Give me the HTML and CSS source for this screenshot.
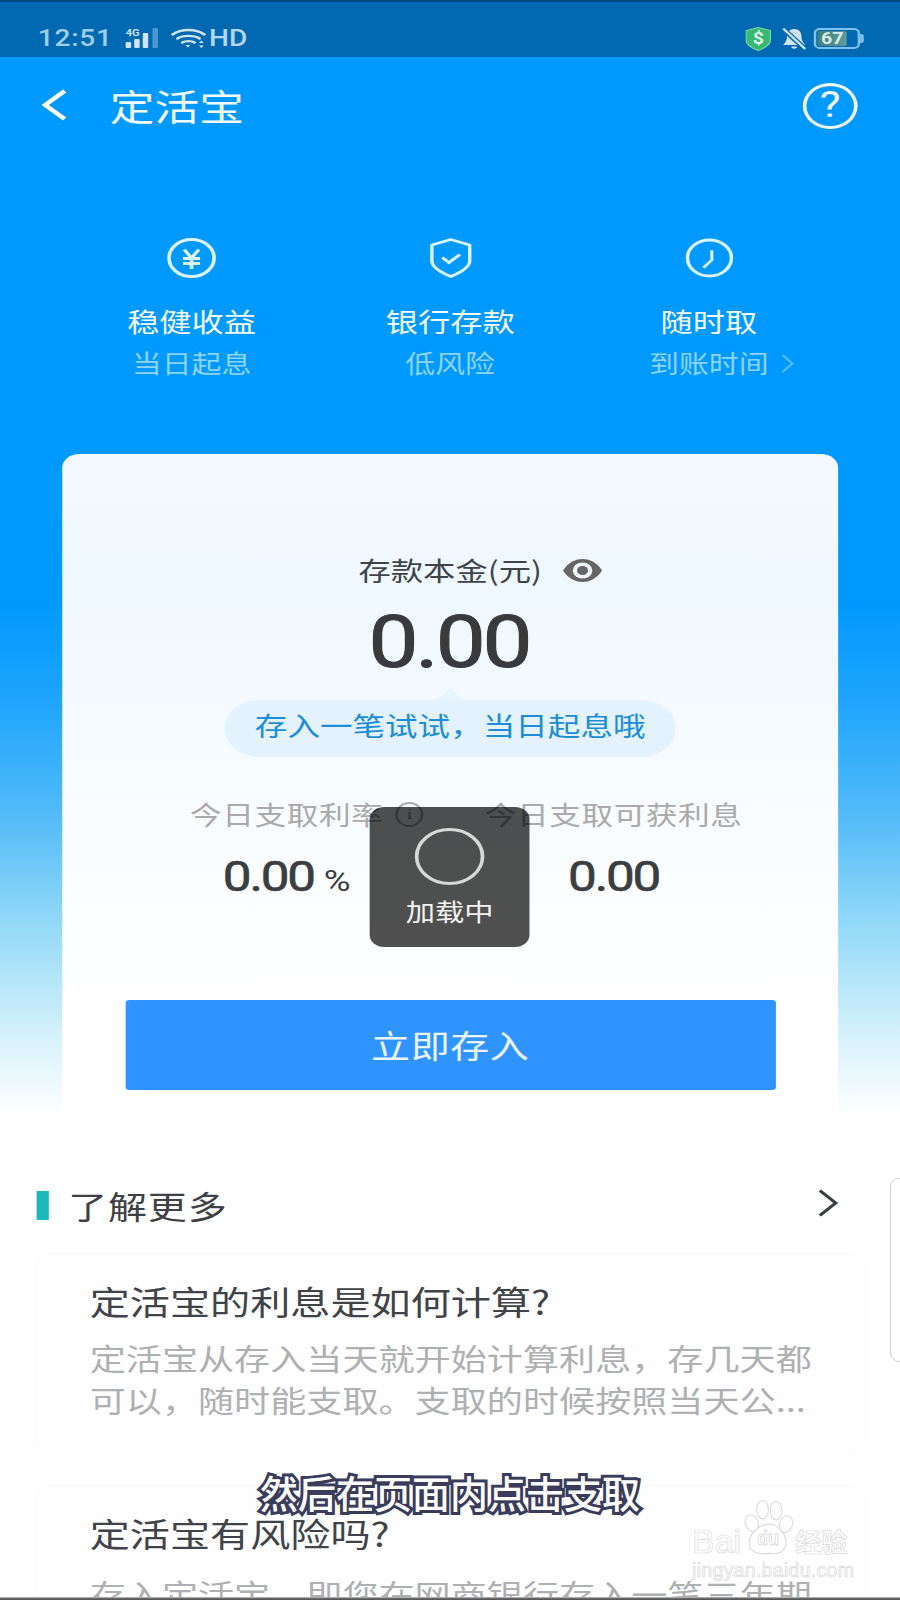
FILE: index.html
```html
<!DOCTYPE html>
<html lang="zh">
<head>
<meta charset="utf-8">
<title>定活宝</title>
<link rel="stylesheet" href="styles.css">
</head>
<body>
<div class="page">
  <div class="screen">
    <div class="status">
      <div class="status-left">
        <span class="time">12:51</span>
        <svg class="ic-signal" viewBox="0 0 30 21"><text x="1" y="8" class="sig-text">4G</text><rect x="1" y="14" width="4.5" height="6" rx="1" fill="#cfe5f5"/><rect x="8" y="11" width="4.5" height="9" rx="1" fill="#cfe5f5"/><rect x="15" y="5" width="4.5" height="15" rx="1" fill="#cfe5f5"/><rect x="23" y="0" width="4.5" height="20" rx="1" fill="#4c97cf"/></svg>
        <svg class="ic-wifi" viewBox="0 0 29 21" fill="none" stroke="#cfe5f5" stroke-width="2.4" stroke-linecap="round"><path d="M1.5 6.5C8.5 .5 20.5 .5 27.5 6.5"/><path d="M5.5 10.5C10 7 19 7 23.5 10.5"/><path d="M9.5 14.5C12 12.7 17 12.7 19.5 14.5"/><path d="M14 19.5l-2-2.4h4z" fill="#cfe5f5" stroke="none"/><path d="M25 12.5l-2 2.4h4zM25 20l-2-2.4h4z" fill="#cfe5f5" stroke="none"/></svg>
        <span class="hd">HD</span>
      </div>
      <div class="status-right">
        <svg class="ic-guard" viewBox="0 0 21 24"><path d="M10.500 .5L20.500 3.500V13C20.500 18 15 21.500 10.500 23.500C6 21.500 .5 18 .5 13V3.500Z" fill="#35b871" stroke="#7fd6a6"/><text x="10.500" y="17" class="guard-text">$</text></svg>
        <svg class="ic-bell" viewBox="0 0 20 22"><path d="M10 1C5.500 1 4 5 4 9C4 13 2 15 1 17H19C18 15 16 13 16 9C16 5 14.500 1 10 1Z M7.500 18.500C8 21.500 12 21.500 12.500 18.500Z" fill="#cfe3f2"/><path d="M1 1L19 21" stroke="#0069b2" stroke-width="4.500"/><path d="M1 .5L19 21" stroke="#cfe3f2" stroke-width="2"/></svg>
        <div class="battery"><span class="battery-level">67</span></div>
      </div>
    </div>

    <div class="header">
      <svg class="ic-back" viewBox="0 0 21 32" fill="none" stroke="#fff" stroke-width="4"><path d="M19 2L3 16L19 30"/></svg>
      <span class="header-title">定活宝</span>
      <span class="help">?</span>
    </div>

    <div class="features">
      <div class="feature">
        <svg class="feature-icon ic-w39" viewBox="0 0 40 40" fill="none" stroke="#d9f3ff" stroke-width="3"><circle cx="20" cy="20" r="18.500"/><path d="M14 11.500L20 20L26 11.500M13 20.500H27M13 25.500H27M20 20V31" stroke-width="3"/></svg>
        <div class="feature-title">稳健收益</div>
        <div class="feature-sub">当日起息</div>
      </div>
      <div class="feature">
        <svg class="feature-icon ic-w34" viewBox="0 0 34 40" fill="none" stroke="#d9f3ff" stroke-width="2.800"><path d="M17 1.500L32.500 7V23C32.500 30 24 35 17 38.500C10 35 1.500 30 1.500 23V7Z" stroke-linejoin="round"/><path d="M10 19.500L15.500 24.500L24.500 16.500"/></svg>
        <div class="feature-title">银行存款</div>
        <div class="feature-sub">低风险</div>
      </div>
      <div class="feature">
        <svg class="feature-icon ic-w38" viewBox="0 0 40 40" fill="none" stroke="#d9f3ff" stroke-width="3"><circle cx="20" cy="20" r="18.500"/><path d="M22 12V22L15 30" stroke-width="2.600"/></svg>
        <div class="feature-title">随时取</div>
        <div class="feature-sub">到账时间<svg class="sub-chevron" viewBox="0 0 12 22" fill="none" stroke="#5cbcf5" stroke-width="2"><path d="M1.500 1.500L10.500 11L1.500 20.500"/></svg></div>
      </div>
    </div>

    <div class="card">
      <div class="balance-label">存款本金(元)<svg class="ic-eye" viewBox="0 0 33 25"><path d="M.5 12.500C5 4 11 1 16.500 1S28 4 32.500 12.500C28 21 22 24 16.500 24S5 21 .5 12.500Z" fill="#666"/><circle cx="16.500" cy="12.500" r="8" fill="#f2f9ff"/><circle cx="16.500" cy="12.500" r="4.500" fill="#666"/></svg></div>
      <div class="balance">0.00</div>
      <div class="tip">存入一笔试试，当日起息哦</div>
      <div class="stats">
        <div class="stat">
          <div class="stat-label">今日支取利率<span class="info">i</span></div>
          <div class="stat-value">0.00<span class="unit">%</span></div>
        </div>
        <div class="stat">
          <div class="stat-label">今日支取可获利息</div>
          <div class="stat-value">0.00</div>
        </div>
      </div>
      <div class="deposit">立即存入</div>
      <div class="toast">
        <span class="spinner"></span>
        <span class="toast-text">加载中</span>
      </div>
    </div>

    <div class="section-head">
      <span class="section-bar"></span>
      <span class="section-title">了解更多</span>
      <svg class="ic-more" viewBox="0 0 17 28" fill="none" stroke="#3a3d42" stroke-width="2.800"><path d="M2 1.500L15 14L2 26.500"/></svg>
    </div>

    <div class="qa">
      <div class="qa-title">定活宝的利息是如何计算?</div>
      <div class="qa-body">定活宝从存入当天就开始计算利息，存几天都<br>可以，随时能支取。支取的时候按照当天公...</div>
    </div>
    <div class="qa">
      <div class="qa-title">定活宝有风险吗?</div>
      <div class="qa-body">存入定活宝，即您在网商银行存入一笔三年期</div>
    </div>
  </div>

  <div class="handle"></div>
  <div class="top-edge"></div>
  <div class="bottom-edge"></div>
  <div class="caption">然后在页面内点击支取</div>
  <div class="watermark">
    <div class="wm-row">
      <span class="wm-latin">Bai</span>
      <svg class="wm-paw" viewBox="0 0 60 60" preserveAspectRatio="none" fill="#fff" stroke="#dcdcdc" stroke-width="1.200"><ellipse cx="12" cy="24" rx="7" ry="9" transform="rotate(-25 12 24)"/><ellipse cx="24" cy="10" rx="6.500" ry="9.500"/><ellipse cx="39" cy="11" rx="6.500" ry="9.500"/><ellipse cx="50" cy="25" rx="7" ry="9" transform="rotate(25 50 25)"/><path d="M31 25C40 25 50 34 50 44C50 54 40 57 31 55C22 57 9 55 9 44C9 34 22 25 31 25Z"/><text x="30" y="47" class="wm-du">du</text></svg>
      <span class="wm-cjk">经验</span>
    </div>
    <div class="wm-url">jingyan.baidu.com</div>
  </div>
</div>
</body>
</html>
```
FILE: styles.css
```css
* { box-sizing: border-box; }
html, body { margin: 0; padding: 0; }
body { font-family: "Noto Sans CJK SC", "Noto Sans", sans-serif; background: #fff; }

.page { position: relative; width: 900px; height: 1600px; overflow: hidden; }
.screen {
  width: 738px;
  height: 1600px;
  overflow: hidden;
  transform: scaleX(1.22);
  transform-origin: 0 0;
  background: linear-gradient(180deg, #0099ff 0, #0099ff 600px, #1ea5fd 700px, #55bcf8 820px, #96dbf8 930px, #d8f2fb 1040px, #ffffff 1115px);
}

/* status bar */
.status {
  height: 57px;
  background: #0069b2;
  display: flex;
  align-items: center;
  justify-content: space-between;
  padding: 20px 30px 0 31px;
}
.status-left, .status-right { display: flex; align-items: center; }
.time { font: 500 23px/1 Roboto, sans-serif; letter-spacing: .6px; color: #9fcdec; }
.ic-signal { width: 30px; height: 21px; margin-left: 10px; }
.sig-text { font: 700 9px Roboto, sans-serif; fill: #cfe5f5; }
.ic-wifi { width: 29px; height: 21px; margin-left: 8px; }
.hd { font: 500 23px/1 Roboto, sans-serif; color: #b4d6ee; margin-left: 2px; }
.ic-guard { width: 21px; height: 24px; }
.guard-text { font: 700 16px Roboto, sans-serif; fill: #dff7e9; text-anchor: middle; }
.ic-bell { width: 20px; height: 22px; margin-left: 9px; }
.battery {
  position: relative;
  width: 38px;
  height: 21px;
  margin: 0 3px 0 6px;
  border: 2px solid #7fc1ee;
  border-radius: 5px;
  padding: 1px;
  display: flex;
}
.battery::after {
  content: "";
  position: absolute;
  right: -5px;
  top: 4px;
  width: 3px;
  height: 9px;
  border-radius: 0 2px 2px 0;
  background: #7fc1ee;
}
.battery-level {
  width: 76%;
  border-radius: 2px;
  background: linear-gradient(90deg, #3f7f7a, #5f9c9c);
  color: #d8ebe6;
  font: 700 16px/15px Roboto, sans-serif;
  text-align: center;
}

/* header */
.header {
  height: 96px;
  display: flex;
  align-items: center;
  padding: 0 35px 0 34px;
  color: #fff;
}
.ic-back { width: 21px; height: 32px; }
.header-title { font-size: 36.700px; line-height: 1; margin-left: 35px; color: #f2fbff; }
.help {
  margin-left: auto;
  width: 45px;
  height: 46px;
  margin-top: 2px;
  border: 3.500px solid #f2fbff;
  border-radius: 50%;
  font: 400 36px/39px Roboto, sans-serif;
  text-align: center;
  color: #f2fbff;
}

/* features */
.features {
  display: grid;
  grid-template-columns: repeat(3, 212px);
  padding: 0 51px;
  margin-top: 85px;
}
.feature { display: flex; flex-direction: column; align-items: center; }
.feature-icon { height: 40px; }
.ic-w39 { width: 40px; }
.ic-w34 { width: 35px; }
.ic-w38 { width: 39px; }
.feature-title { font-size: 26.400px; line-height: 36px; margin-top: 25px; color: #f4fbff; }
.feature-sub { font-size: 24.500px; line-height: 34px; margin-top: 7px; color: #8ed3fb; display: flex; align-items: center; }
.sub-chevron { width: 11px; height: 21px; margin-left: 10px; margin-right: -21px; }

/* main card */
.card {
  position: relative;
  width: 636px;
  height: 656px;
  margin: 74px 0 0 51px;
  padding-top: 99px;
  border-radius: 14px 14px 0 0;
  background: linear-gradient(180deg, #f5f9fd 0, #eff8ff 120px, #f6fbff 300px, #fdfeff 480px, #ffffff 560px);
  display: flex;
  flex-direction: column;
  align-items: center;
}
.balance-label { font-size: 26.500px; line-height: 34px; color: #404448; display: flex; align-items: center; }
.ic-eye { width: 33px; height: 25px; margin-left: 17px; margin-right: -50px; }
.balance { font: 400 73px/80px Roboto, sans-serif; -webkit-text-stroke: 1px #383b3e; letter-spacing: -2.600px; color: #383b3e; margin: 15px 2px 0 0; }
.tip {
  position: relative;
  width: 370px;
  height: 57px;
  margin-top: 18px;
  border-radius: 29px;
  background: #e3f2fd;
  color: #1c8dd6;
  font-size: 26.700px;
  line-height: 50px;
  text-align: center;
}
.tip::before {
  content: "";
  position: absolute;
  left: 50%;
  top: -12px;
  margin-left: -11px;
  border-left: 11px solid transparent;
  border-right: 11px solid transparent;
  border-bottom: 12px solid #e8f4fd;
}
.stats { display: grid; grid-template-columns: repeat(2, 268px); margin-top: 39px; }
.stat { display: flex; flex-direction: column; align-items: center; }
.stat-label { font-size: 26px; line-height: 36px; letter-spacing: .4px; color: #aaa; white-space: nowrap; display: flex; align-items: center; }
.info {
  width: 23px;
  height: 25px;
  margin-left: 10px;
  margin-right: -33px;
  border: 2px solid #aaa;
  border-radius: 50%;
  font: 500 15px/21px "Liberation Serif", serif;
  text-align: center;
  letter-spacing: 0;
  color: #888;
}
.stat-value { font: 400 42px/56px Roboto, sans-serif; -webkit-text-stroke: .6px #3b3e41; letter-spacing: -1.800px; color: #3b3e41; margin-top: 17px; }
.unit { font-size: 30px; letter-spacing: 0; margin-left: 8px; -webkit-text-stroke: 0; }
.deposit {
  width: 533px;
  height: 90px;
  margin-top: 91px;
  border-radius: 3px;
  background: #2f94ff;
  color: #eaf4ff;
  font-size: 32px;
  line-height: 88px;
  letter-spacing: .4px;
  text-align: center;
  flex: none;
}
.toast {
  position: absolute;
  left: 252px;
  top: 353px;
  width: 131px;
  height: 140px;
  padding-top: 21px;
  border-radius: 12px;
  background: rgba(0, 0, 0, .69);
  display: flex;
  flex-direction: column;
  align-items: center;
}
.spinner { width: 57px; height: 57px; border: 3px solid #d8d8d6; border-radius: 50%; }
.toast-text { font-size: 24px; line-height: 36px; margin-top: 8px; color: #f2f2f0; }

/* section */
.section-head {
  height: 44px;
  margin-top: 73px;
  padding: 0 51px 0 30px;
  display: flex;
  align-items: center;
}
.section-bar { width: 10px; height: 29px; background: #1cb9ba; }
.section-title { font-size: 32px; line-height: 44px; letter-spacing: .6px; margin-left: 16px; color: #3e4145; }
.ic-more { width: 17px; height: 28px; margin-left: auto; position: relative; top: -2px; }

.qa {
  width: 679px;
  margin: 27px 0 0 30px;
  padding: 25px 0 31px 43.500px;
  border-radius: 14px;
  background: #fefefe;
  box-shadow: 0 0 4px rgba(0, 0, 0, .03);
}
.qa + .qa { margin-top: 34px; }
.qa + .qa .qa-body { margin-top: 18px; }
.qa-title { font-size: 32.900px; line-height: 44px; color: #404347; white-space: nowrap; }
.qa-body { font-size: 29.600px; line-height: 42px; margin-top: 14px; color: #aeb0b2; white-space: nowrap; }

/* overlays */
.handle {
  position: absolute;
  right: -2px;
  top: 1178px;
  width: 12px;
  height: 184px;
  border: 1px solid #d0d0d0;
  border-radius: 9px 0 0 9px;
  background: #fff;
}
.top-edge { position: absolute; left: 0; right: 0; top: 0; height: 2px; background: #00467f; }
.bottom-edge { position: absolute; left: 0; right: 0; bottom: 0; height: 3px; background: linear-gradient(180deg, #c9c9c9 0, #6a6a6a 50%, #4e4e4e 100%); }
.caption {
  position: absolute;
  left: 258px;
  top: 1466px;
  width: 384px;
  font-size: 38px;
  line-height: 52px;
  font-weight: 500;
  text-align: center;
  white-space: nowrap;
  color: #fff;
  -webkit-text-stroke: 6px #3b3d5e;
  paint-order: stroke fill;
  text-shadow: 1px 1px 2px rgba(60, 60, 70, .55);
}
.watermark {
  position: absolute;
  left: 692px;
  top: 1500px;
  width: 160px;
  color: #fff;
  -webkit-text-stroke: .7px #d9d9d9;
}
.wm-row { display: flex; align-items: flex-end; height: 58px; }
.wm-latin { font: 400 34px/34px "Liberation Sans", sans-serif; }
.wm-paw { width: 54px; height: 58px; flex: none; -webkit-text-stroke: 0; }
.wm-du { font: 700 20px "Liberation Sans", sans-serif; text-anchor: middle; fill: #fff; stroke: #d8d8d8; stroke-width: .8; }
.wm-cjk { font-size: 26px; line-height: 34px; font-weight: 700; }
.wm-url { font: 400 19.500px/20px "Liberation Sans", sans-serif; letter-spacing: .3px; margin-top: 2px; }
```
